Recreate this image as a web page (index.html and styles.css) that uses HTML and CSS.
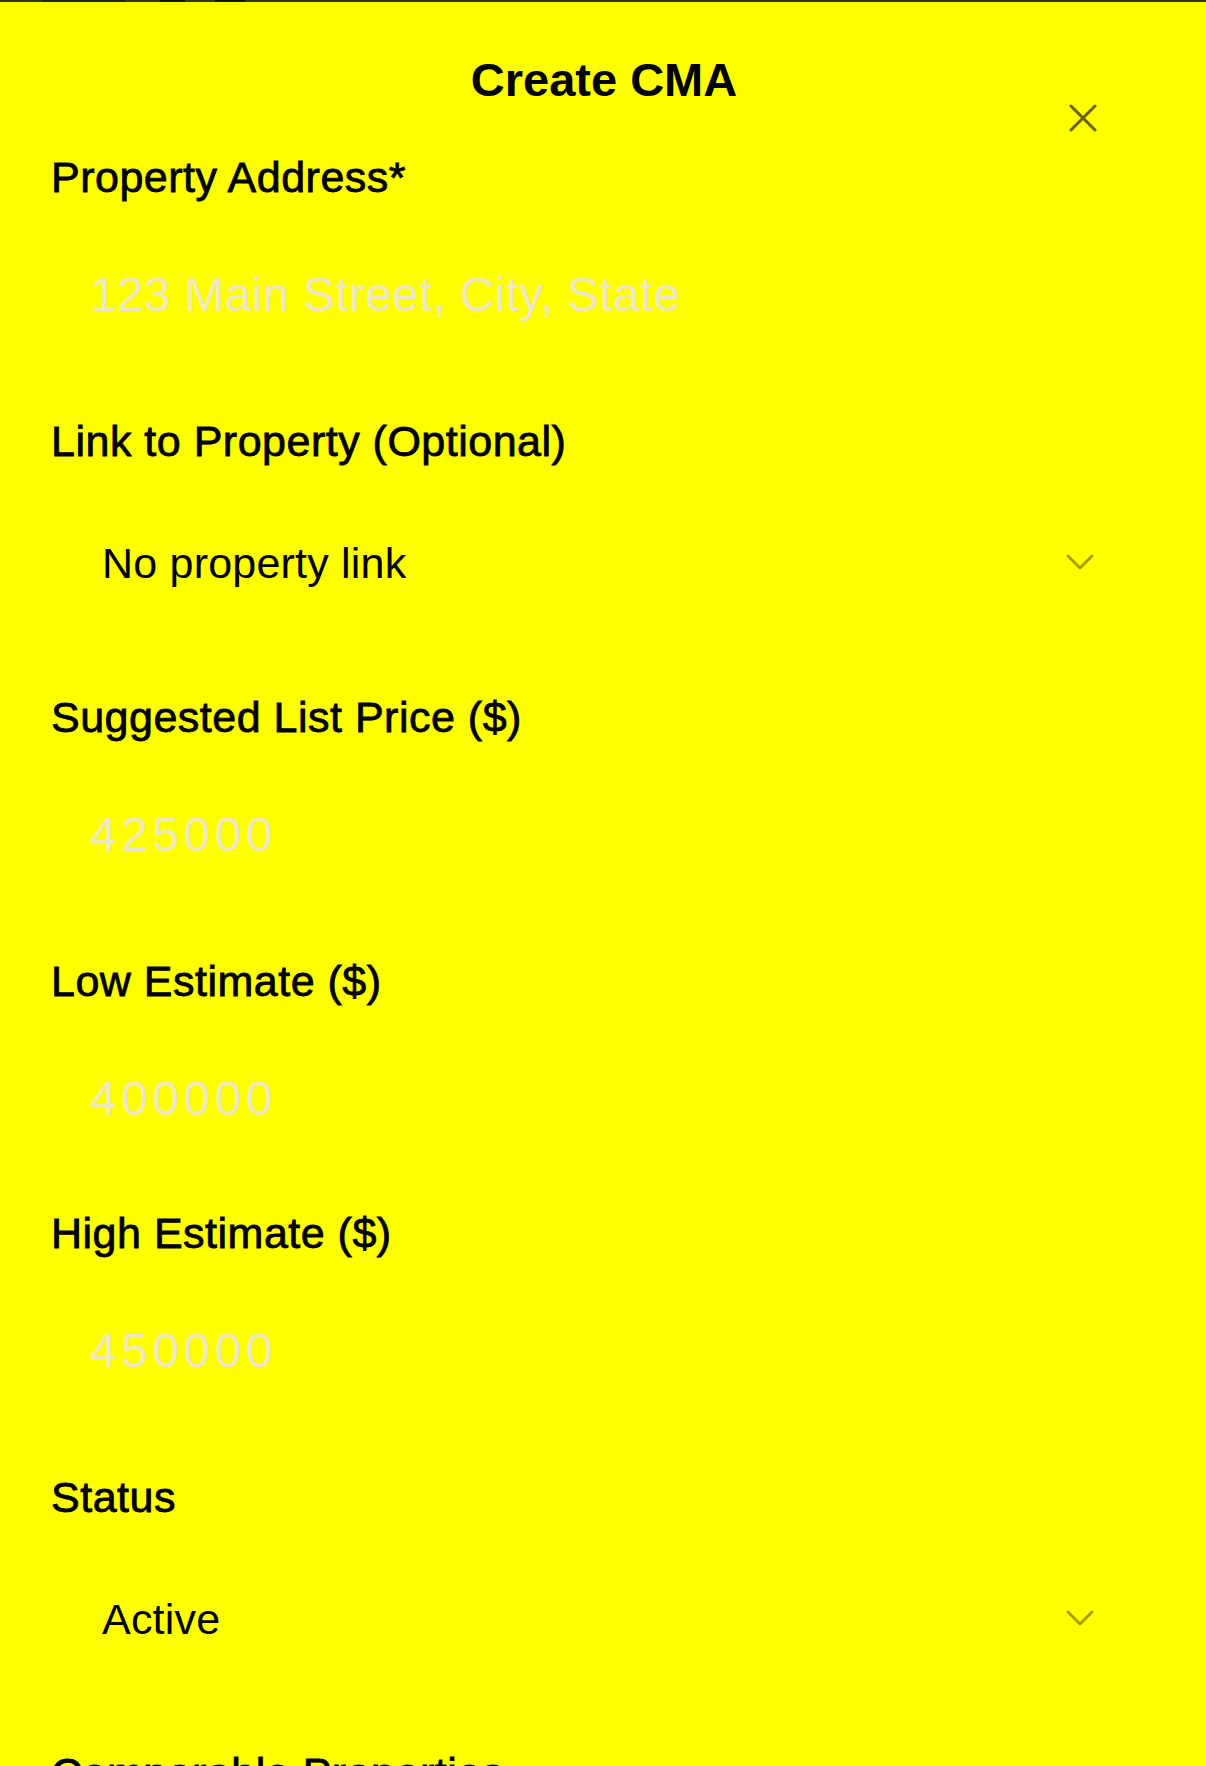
FILE: index.html
```html
<!DOCTYPE html>
<html lang="en">
<head>
<meta charset="utf-8">
<title>Create CMA</title>
<link rel="stylesheet" href="styles.css">
</head>
<body>
<div class="backdrop-edge"></div>
<div class="modal">
  <h2 class="modal-title">Create CMA</h2>
  <button class="close-btn" type="button" aria-label="Close">
    <svg width="28" height="28" viewBox="0 0 28 28" fill="none" stroke="currentColor" stroke-width="3" stroke-linecap="round">
      <line x1="2" y1="2" x2="26" y2="26"/>
      <line x1="26" y1="2" x2="2" y2="26"/>
    </svg>
  </button>
  <form class="form">
    <div class="field">
      <label class="field-label" for="addr">Property Address*</label>
      <input class="field-input field-input--text" id="addr" type="text" placeholder="123 Main Street, City, State">
    </div>
    <div class="field">
      <label class="field-label" for="link">Link to Property (Optional)</label>
      <div class="select-wrap">
        <select class="field-select" id="link">
          <option>No property link</option>
        </select>
        <svg class="chevron" width="28" height="17" viewBox="0 0 28 17" fill="none" stroke="currentColor" stroke-width="3" stroke-linecap="round" stroke-linejoin="round">
          <polyline points="2,2 14,14 26,2"/>
        </svg>
      </div>
    </div>
    <div class="field">
      <label class="field-label" for="price">Suggested List Price ($)</label>
      <input class="field-input field-input--num" id="price" type="text" inputmode="numeric" placeholder="425000">
    </div>
    <div class="pair">
      <div class="field">
        <label class="field-label" for="low">Low Estimate ($)</label>
        <input class="field-input field-input--num" id="low" type="text" inputmode="numeric" placeholder="400000">
      </div>
      <div class="field">
        <label class="field-label" for="high">High Estimate ($)</label>
        <input class="field-input field-input--num" id="high" type="text" inputmode="numeric" placeholder="450000">
      </div>
    </div>
    <div class="field">
      <label class="field-label" for="status">Status</label>
      <div class="select-wrap">
        <select class="field-select" id="status">
          <option>Active</option>
          <option>Draft</option>
          <option>Archived</option>
        </select>
        <svg class="chevron" width="28" height="17" viewBox="0 0 28 17" fill="none" stroke="currentColor" stroke-width="3" stroke-linecap="round" stroke-linejoin="round">
          <polyline points="2,2 14,14 26,2"/>
        </svg>
      </div>
    </div>
    <div class="field">
      <div class="field-label">Comparable Properties</div>
      <div class="comps-note">Add comparable sales to support your pricing.</div>
    </div>
  </form>
</div>
</body>
</html>
```

FILE: styles.css
```css
* {
  box-sizing: border-box;
}

html, body {
  margin: 0;
  padding: 0;
  background: #ffff00;
}

body {
  font-family: "Liberation Sans", Arial, sans-serif;
  color: #000;
}

.backdrop-edge {
  height: 2px;
  background: linear-gradient(to right, #333 0 42px, #1c1c38 42px 125px, #333 125px 160px, #111 160px 185px, #333 185px 215px, #111 215px 245px, #333 245px 100%);
}

.modal {
  position: relative;
  padding: 48px 49px 120px 51px;
}

.modal-title {
  margin: 0;
  font-size: 47px;
  line-height: 60px;
  font-weight: 700;
  text-align: center;
  color: #000;
}

.close-btn {
  position: absolute;
  top: 102px;
  right: 109px;
  width: 28px;
  height: 28px;
  padding: 0;
  border: 0;
  background: transparent;
  color: #646200;
  cursor: pointer;
  display: flex;
}

.form {
  margin-top: 37px;
  display: flex;
  flex-direction: column;
  gap: 42px;
}

.pair {
  display: flex;
  flex-direction: column;
  gap: 30px;
}

.field {
  display: flex;
  flex-direction: column;
}

.field-label {
  display: block;
  font-size: 43px;
  line-height: 60px;
  letter-spacing: 0.5px;
  -webkit-text-stroke: 0.8px #000;
  color: #000;
  margin-bottom: 12px;
}

.field-input {
  height: 150px;
  width: 100%;
  padding: 0 0 0 39px;
  border: 0;
  outline: none;
  background: transparent;
  font-family: "Liberation Sans", Arial, sans-serif;
  font-size: 48px;
  color: #000;
}

.field-input--text {
  letter-spacing: 0.25px;
}

.field-input--num {
  letter-spacing: 4.5px;
}

.field-input::placeholder {
  color: #ede8c2;
  opacity: 1;
}

.select-wrap {
  display: grid;
  height: 162px;
}

.field-select {
  grid-area: 1 / 1;
  -webkit-appearance: none;
  appearance: none;
  width: 100%;
  height: 162px;
  padding: 0 0 3px 51px;
  border: 0;
  outline: none;
  border-radius: 0;
  background: transparent;
  font-family: "Liberation Sans", Arial, sans-serif;
  font-size: 43px;
  letter-spacing: 0.2px;
  color: #000;
}

.chevron {
  grid-area: 1 / 1;
  justify-self: end;
  align-self: center;
  margin-right: 63px;
  margin-bottom: 4px;
  color: #a5a000;
  pointer-events: none;
}

.comps-note {
  font-size: 40px;
  color: #555;
}
```
